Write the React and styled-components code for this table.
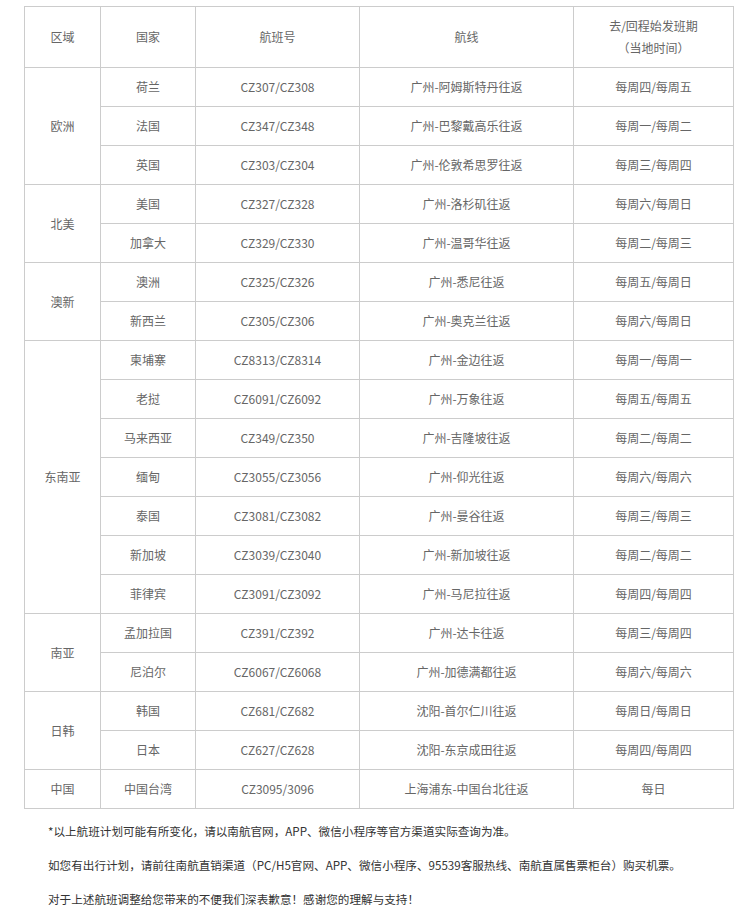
import React from "react";
import styled, { createGlobalStyle } from "styled-components";

const GlobalStyle = createGlobalStyle`
  html, body {
    margin: 0;
    padding: 0;
    background: #ffffff;
  }
  body {
    font-family: "Noto Sans CJK SC", "Microsoft YaHei", sans-serif;
    text-spacing-trim: space-all;
  }
`;

const regions = [
  {
    name: "欧洲",
    rows: [
      ["荷兰", "CZ307/CZ308", "广州-阿姆斯特丹往返", "每周四/每周五"],
      ["法国", "CZ347/CZ348", "广州-巴黎戴高乐往返", "每周一/每周二"],
      ["英国", "CZ303/CZ304", "广州-伦敦希思罗往返", "每周三/每周四"],
    ],
  },
  {
    name: "北美",
    rows: [
      ["美国", "CZ327/CZ328", "广州-洛杉矶往返", "每周六/每周日"],
      ["加拿大", "CZ329/CZ330", "广州-温哥华往返", "每周二/每周三"],
    ],
  },
  {
    name: "澳新",
    rows: [
      ["澳洲", "CZ325/CZ326", "广州-悉尼往返", "每周五/每周日"],
      ["新西兰", "CZ305/CZ306", "广州-奥克兰往返", "每周六/每周日"],
    ],
  },
  {
    name: "东南亚",
    rows: [
      ["柬埔寨", "CZ8313/CZ8314", "广州-金边往返", "每周一/每周一"],
      ["老挝", "CZ6091/CZ6092", "广州-万象往返", "每周五/每周五"],
      ["马来西亚", "CZ349/CZ350", "广州-吉隆坡往返", "每周二/每周二"],
      ["缅甸", "CZ3055/CZ3056", "广州-仰光往返", "每周六/每周六"],
      ["泰国", "CZ3081/CZ3082", "广州-曼谷往返", "每周三/每周三"],
      ["新加坡", "CZ3039/CZ3040", "广州-新加坡往返", "每周二/每周二"],
      ["菲律宾", "CZ3091/CZ3092", "广州-马尼拉往返", "每周四/每周四"],
    ],
  },
  {
    name: "南亚",
    rows: [
      ["孟加拉国", "CZ391/CZ392", "广州-达卡往返", "每周三/每周四"],
      ["尼泊尔", "CZ6067/CZ6068", "广州-加德满都往返", "每周六/每周六"],
    ],
  },
  {
    name: "日韩",
    rows: [
      ["韩国", "CZ681/CZ682", "沈阳-首尔仁川往返", "每周日/每周日"],
      ["日本", "CZ627/CZ628", "沈阳-东京成田往返", "每周四/每周四"],
    ],
  },
  {
    name: "中国",
    rows: [["中国台湾", "CZ3095/3096", "上海浦东-中国台北往返", "每日"]],
  },
];

const notes = [
  "*以上航班计划可能有所变化，请以南航官网，APP、微信小程序等官方渠道实际查询为准。",
  "如您有出行计划，请前往南航直销渠道（PC/H5官网、APP、微信小程序、95539客服热线、南航直属售票柜台）购买机票。",
  "对于上述航班调整给您带来的不便我们深表歉意！感谢您的理解与支持！",
];

const App = () => (
  <Page>
    <GlobalStyle />
    <Table>
      <colgroup>
        <col style={{ width: 76 }} />
        <col style={{ width: 95 }} />
        <col style={{ width: 164 }} />
        <col style={{ width: 214 }} />
        <col style={{ width: 160 }} />
      </colgroup>
      <thead>
        <tr>
          <HeadCell>区域</HeadCell>
          <HeadCell>国家</HeadCell>
          <HeadCell>航班号</HeadCell>
          <HeadCell>航线</HeadCell>
          <HeadCell>
            去/回程始发班期
            <br />（当地时间）
          </HeadCell>
        </tr>
      </thead>
      <tbody>
        {regions.map((region) =>
          region.rows.map((row, i) => (
            <tr key={region.name + row[0]}>
              {i === 0 && <Cell rowSpan={region.rows.length}>{region.name}</Cell>}
              {row.map((value, j) => (
                <Cell key={j}>{value}</Cell>
              ))}
            </tr>
          ))
        )}
      </tbody>
    </Table>
    <Notes>
      {notes.map((note) => (
        <Note key={note}>{note}</Note>
      ))}
    </Notes>
  </Page>
);

export default App;

const Page = styled.div`
  width: 755px;
  padding: 6px 0 0 24px;
  box-sizing: border-box;
`;

const Table = styled.table`
  width: 710px;
  border-collapse: collapse;
  table-layout: fixed;
  font-size: 12px;
  color: #666666;
`;

const HeadCell = styled.th`
  height: 60px;
  padding: 0;
  border: 1px solid #cccccc;
  font-weight: normal;
  text-align: center;
  line-height: 22px;
`;

const Cell = styled.td`
  height: 38px;
  padding: 0;
  border: 1px solid #cccccc;
  text-align: center;
  line-height: 20px;
`;

const Notes = styled.div`
  padding: 12px 0 0 24px;
  font-size: 11.6px;
  color: #333333;
`;

const Note = styled.p`
  margin: 0 0 13px;
  line-height: 21px;
`;
